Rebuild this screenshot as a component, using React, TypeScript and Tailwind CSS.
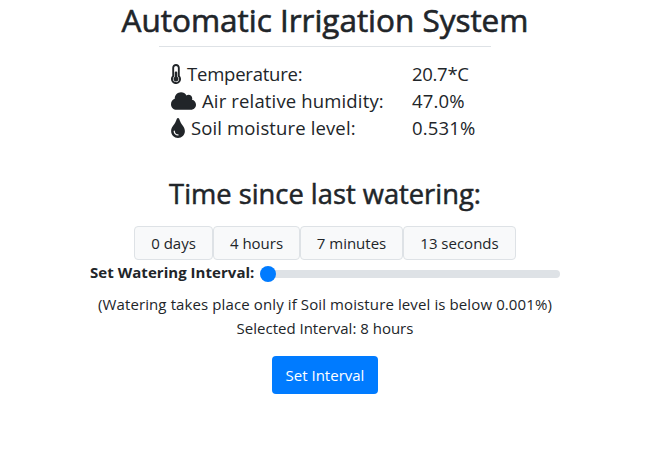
import { FaCloud, FaThermometerHalf, FaTint } from 'react-icons/fa';

const readings = [
  { icon: <FaThermometerHalf className="h-5 w-[10px]" />, tracking: 'tracking-[-0.22px]', label: 'Temperature:', value: '20.7*C', valueTracking: 'tracking-[-0.3px]' },
  { icon: <FaCloud className="h-5 w-[25px]" />, tracking: 'tracking-[0.15px]', label: 'Air relative humidity:', value: '47.0%', valueTracking: 'tracking-[0.15px]' },
  { icon: <FaTint className="h-5 w-[14px]" />, tracking: 'tracking-[0.13px]', label: 'Soil moisture level:', value: '0.531%', valueTracking: 'tracking-[0.15px]' },
];

const elapsed = [
  { text: '0 days', width: 'w-[79px]' },
  { text: '4 hours', width: 'w-[87px]' },
  { text: '7 minutes', width: 'w-[103px]' },
  { text: '13 seconds', width: 'w-[113px]' },
];

export default function App() {
  return (
    <main className="flex h-[468px] w-[650px] flex-col items-center overflow-hidden bg-white font-['Open_Sans','Noto_Sans',sans-serif] text-[15px] leading-6 whitespace-nowrap text-[#212529]">
      <h1 className="h-[46px] text-[31.5px] leading-[40px] font-medium tracking-[-0.02px] [-webkit-text-stroke:0.6px_#212529]">Automatic Irrigation System</h1>
      <hr className="w-[332px] border-t border-[#dee2e6]" />
      <dl className="mt-[13px] w-[308px] text-[18.5px] leading-[27px]">
        {readings.map((r) => (
          <div key={r.label} className="flex">
            <dt className="flex w-[241px] items-center gap-[6px]">
              {r.icon}
              <span className={r.tracking}>{r.label}</span>
            </dt>
            <dd className={r.valueTracking}>{r.value}</dd>
          </div>
        ))}
      </dl>
      <h2 className="mt-[35px] h-[50px] text-[27.3px] leading-[36px] font-medium [-webkit-text-stroke:0.5px_#212529]">Time since last watering:</h2>
      <div className="flex">
        {elapsed.map((e) => (
          <div key={e.text} className={`flex h-[34px] items-center justify-center rounded border border-[#dee2e6] bg-[#f8f9fa] ${e.width}`}>
            {e.text}
          </div>
        ))}
      </div>
      <div className="flex h-7 w-[470px] items-center">
        <label className="w-[170px] pb-[4px] font-bold tracking-[0.04px]">Set Watering Interval:</label>
        <div className="flex h-2 w-[300px] items-center rounded-full bg-[#dee2e6]">
          <div className="size-4 rounded-full bg-[#007bff]" />
        </div>
      </div>
      <p className="mt-1 tracking-[0.11px]">(Watering takes place only if Soil moisture level is below 0.001%)</p>
      <p>Selected Interval: 8 hours</p>
      <button className="mt-4 h-[38px] w-[106px] rounded bg-[#007bff] text-white">Set Interval</button>
    </main>
  );
}
